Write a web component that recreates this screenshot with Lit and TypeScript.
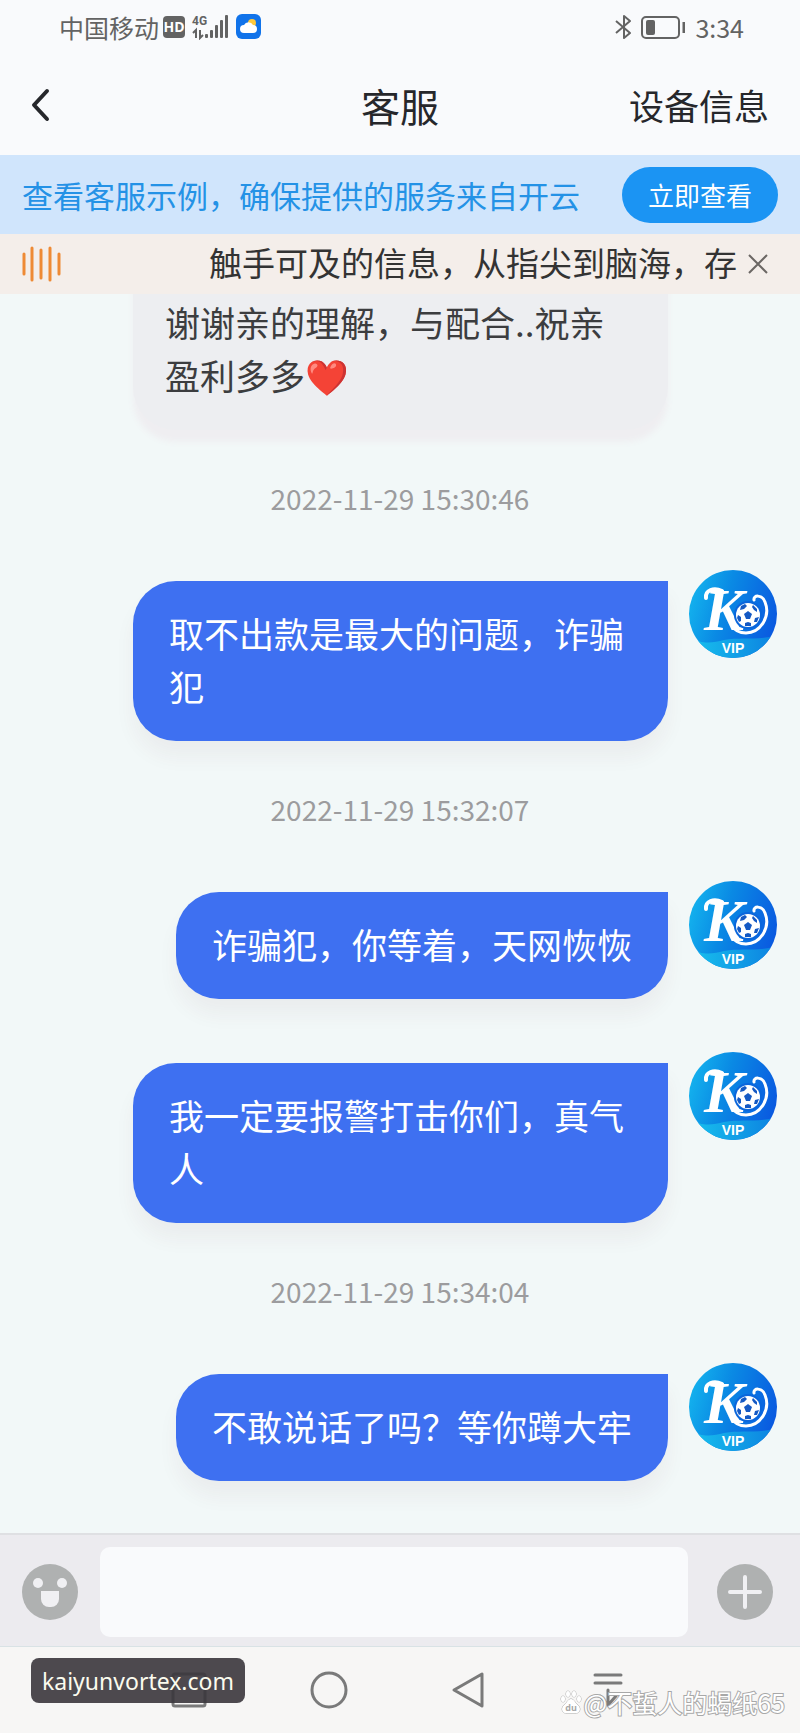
import { LitElement, html, css, svg } from 'lit';
import { customElement, property } from 'lit/decorators.js';

interface Entry {
  kind: 'time' | 'sent' | 'received';
  text: string;
}

const entries: Entry[] = [
  { kind: 'received', text: '谢谢亲的理解，与配合..祝亲盈利多多❤️' },
  { kind: 'time', text: '2022-11-29 15:30:46' },
  { kind: 'sent', text: '取不出款是最大的问题，诈骗犯' },
  { kind: 'time', text: '2022-11-29 15:32:07' },
  { kind: 'sent', text: '诈骗犯，你等着，天网恢恢' },
  { kind: 'sent', text: '我一定要报警打击你们，真气人' },
  { kind: 'time', text: '2022-11-29 15:34:04' },
  { kind: 'sent', text: '不敢说话了吗？等你蹲大牢' },
];

@customElement('vip-avatar')
export class VipAvatar extends LitElement {
  static styles = css`
    :host {
      display: block;
      flex: none;
      width: 90px;
      height: 90px;
    }
    svg {
      display: block;
    }
    .letter {
      font: italic 700 60px 'Liberation Serif', serif;
    }
    .vip {
      font: 700 14px 'Liberation Sans', sans-serif;
    }
  `;

  render() {
    return html`
      <svg width="90" height="90" viewBox="0 0 90 90" role="img" aria-label="K VIP">
        <defs>
          <linearGradient id="disc" x1="0" y1="0.3" x2="1" y2="0.6">
            <stop offset="0" stop-color="#14b4ee"/>
            <stop offset="0.4" stop-color="#0a8ae4"/>
            <stop offset="1" stop-color="#0a58e0"/>
          </linearGradient>
          <linearGradient id="wave" x1="0" y1="0" x2="1" y2="0">
            <stop offset="0" stop-color="#18c3ee"/>
            <stop offset="1" stop-color="#0c80e0"/>
          </linearGradient>
          <clipPath id="round"><circle cx="45" cy="45" r="44"/></clipPath>
        </defs>
        <g clip-path="url(#round)">
          <rect width="90" height="90" fill="url(#disc)"/>
          <path d="M0 67 C14 76 24 74 36 71 C54 68 70 72 90 66 V90 H0Z" fill="url(#wave)"/>
        </g>
        <text class="letter" x="16" y="61" fill="#fff">K</text>
        <!-- swashes around the letter and the ball -->
        <g fill="none" stroke="#fff" stroke-linecap="round">
          <path d="M34 22 C26 18 17 21 18 29" stroke-width="4"/>
          <path d="M44 56 C47 62 52 64 58 64 C72 64 83 48 77 33 C74 25 65 26 66 31" stroke-width="3"/>
        </g>
        <circle cx="60" cy="46" r="14" fill="#0a66dc"/>
        <circle cx="60" cy="46" r="12" fill="#fff"/>
        <g fill="#1459c4">
          <path d="M60 42 l4 3 -2 5 h-4 l-2 -5z"/>
          <path d="M53 37 l4 -2 2 2 -3 3 -4 1z M65 36 l4 4 0 3 -3 -2 -2 -3z M71 48 l-2 5 -3 0 1 -4z M63 57 l-6 0 0 -3 3 -1 3 1z M49 49 l1 -3 3 2 0 4 -2 1z"/>
        </g>
        <text class="vip" x="45" y="84" text-anchor="middle" fill="#fff">VIP</text>
      </svg>
    `;
  }
}

@customElement('chat-message')
export class ChatMessage extends LitElement {
  @property() kind = 'sent';
  @property() text = '';

  static styles = css`
    :host {
      display: flex;
      justify-content: flex-end;
      gap: 20px;
      padding-right: 22px;
    }
    p {
      box-sizing: border-box;
      max-width: 535px;
      margin: 12px 0 0;
      padding: 25px 36px 29px;
      border-radius: 43px 0 43px 43px;
      font-size: 35px;
      line-height: 53px;
      color: #fff;
      background: #3e70f1;
      box-shadow: 0 16px 20px rgba(100, 40, 60, 0.05);
    }
    p.received {
      width: 535px;
      margin: 0 110px 0 0;
      padding: 25px 32px 29px;
      border-radius: 0 0 43px 43px;
      color: #3c3d3f;
      background: #edeef1;
      box-shadow: 0 12px 6px #efeef1;
    }
  `;

  render() {
    return html`
      <p class=${this.kind}>${this.text}</p>
      ${this.kind === 'sent' ? html`<vip-avatar></vip-avatar>` : ''}
    `;
  }
}

@customElement('status-bar')
export class StatusBar extends LitElement {
  static styles = css`
    :host {
      display: flex;
      justify-content: space-between;
      align-items: center;
      height: 54px;
      padding: 0 56px 0 59px;
      font-size: 25px;
      color: #636363;
    }
    div {
      display: flex;
      align-items: center;
    }
    .left {
      gap: 4px;
    }
    .right {
      gap: 10px;
    }
    svg {
      display: block;
    }
    .hd {
      font: 700 14px 'Open Sans', sans-serif;
    }
    .net {
      font: 700 12px Roboto, sans-serif;
    }
  `;

  render() {
    const bars = [4, 8, 13, 18, 23];
    return html`
      <div class="left">
        <span>中国移动</span>
        <svg width="98" height="26" viewBox="0 0 98 26">
          <rect y="2" width="22" height="22" rx="4" fill="#636363"/>
          <text class="hd" x="11" y="18" text-anchor="middle" fill="#fff">HD</text>
          <text class="net" x="29" y="11" fill="#636363">4G</text>
          <path d="M30 19 l3 -3 V24 M37 16 V24 l3 -3" stroke="#636363" stroke-width="2" fill="none"/>
          ${bars.map((h, i) => svg`<rect x=${42 + i * 5} y=${24 - h} width="3" height=${h} rx="1" fill="#636363"/>`)}
          <rect x="73" width="25" height="25" rx="6" fill="#1173ea"/>
          <circle cx="89" cy="9" r="4" fill="#ffc93c"/>
          <path d="M81 19 a4 4 0 0 1 0 -8 a5 5 0 0 1 9 0 a4 4 0 0 1 0 8z" fill="#fff"/>
        </svg>
      </div>
      <div class="right">
        <svg width="70" height="26" viewBox="0 0 70 26" fill="none" stroke="#636363" stroke-width="2">
          <path d="M1 7 L15 19 L9 24 V2 L15 7 L1 19" stroke-linejoin="round"/>
          <rect x="27" y="3" width="37" height="21" rx="4"/>
          <rect x="31" y="6" width="9" height="15" rx="2" fill="#636363" stroke="none"/>
          <path d="M69 8 v11" stroke-width="3"/>
        </svg>
        <span>3:34</span>
      </div>
    `;
  }
}

@customElement('app-root')
export class AppRoot extends LitElement {
  static styles = css`
    :host {
      display: flex;
      flex-direction: column;
      position: relative;
      height: 100vh;
      overflow: hidden;
      font-family: 'Noto Sans CJK SC', sans-serif;
      background: #f9fafc;
    }
    button {
      display: flex;
      align-items: center;
      justify-content: center;
      border: 0;
      padding: 0;
      font-family: inherit;
      background: none;
    }
    svg {
      display: block;
    }
    header {
      display: grid;
      grid-template-columns: 1fr auto 1fr;
      align-items: center;
      height: 101px;
      padding: 0 31px;
      color: #26272b;
    }
    header button {
      justify-self: start;
    }
    h1 {
      margin: 0;
      font-size: 39px;
      font-weight: 400;
    }
    .device {
      justify-self: end;
      font-size: 35px;
      color: inherit;
      text-decoration: none;
    }
    .notice {
      display: flex;
      align-items: center;
      justify-content: space-between;
      height: 79px;
      padding: 0 22px;
      font-size: 31px;
      color: #2492e6;
      background: #d0e5fc;
    }
    .notice button {
      width: 156px;
      height: 56px;
      border-radius: 28px;
      font-size: 26px;
      color: #fff;
      background: #1b94f3;
    }
    .ticker {
      display: flex;
      align-items: center;
      height: 60px;
      padding: 0 32px 0 22px;
      color: #333;
      background: #f4eeea;
    }
    .ticker p {
      flex: 1;
      min-width: 0;
      margin: 0 10px 0 147px;
      padding-bottom: 4px;
      overflow: hidden;
      white-space: nowrap;
      font-size: 33px;
    }
    main {
      display: flex;
      flex: 1;
      flex-direction: column;
      justify-content: flex-end;
      gap: 52px;
      min-height: 0;
      padding-bottom: 52px;
      overflow: hidden;
      background: #f2f8f8;
    }
    time {
      padding-bottom: 3px;
      font-size: 28px;
      line-height: 32px;
      text-align: center;
      color: #9c9c9e;
    }
    form {
      display: flex;
      align-items: center;
      gap: 22px;
      padding: 12px 27px 9px 22px;
      border-top: 2px solid #dfe0e3;
      background: #ecebef;
    }
    input {
      flex: 1;
      min-width: 0;
      height: 90px;
      box-sizing: border-box;
      margin-right: 7px;
      padding: 0 20px;
      border: 0;
      border-radius: 10px;
      font: inherit;
      font-size: 33px;
      background: #f9fafc;
    }
    nav {
      display: grid;
      grid-template-columns: repeat(4, 1fr);
      height: 86px;
      padding: 0 122px 0 119px;
      border-top: 1px solid #d9e2e5;
      background: #f7f6f5;
    }
    .site {
      position: absolute;
      left: 31px;
      bottom: 30px;
      padding: 2px 11px 0;
      border-radius: 8px;
      font-family: 'Noto Sans', sans-serif;
      font-size: 23px;
      line-height: 43px;
      color: #fbfbee;
      background: rgba(58, 54, 60, 0.9);
    }
    .mark {
      position: absolute;
      right: 15px;
      bottom: 13px;
      display: flex;
      align-items: center;
      gap: 2px;
      font-size: 25px;
      line-height: 36px;
      color: #fff;
      -webkit-text-stroke: 2px #a8a8a8;
      paint-order: stroke fill;
    }
    .du {
      font: 700 9px 'Open Sans', sans-serif;
      -webkit-text-stroke: 0;
    }
  `;

  render() {
    return html`
      <status-bar></status-bar>
      <header>
        <button aria-label="返回">
          <svg width="20" height="34" viewBox="0 0 20 34" fill="none" stroke="#26272b" stroke-width="4" stroke-linecap="round" stroke-linejoin="round"><path d="M16 3 L3 17 L16 31"/></svg>
        </button>
        <h1>客服</h1>
        <a class="device" href="#device">设备信息</a>
      </header>
      <div class="notice">
        <span>查看客服示例，确保提供的服务来自开云</span>
        <button>立即查看</button>
      </div>
      <div class="ticker">
        <svg width="40" height="36" viewBox="0 0 40 36" stroke="#ee8a35" stroke-width="3" stroke-linecap="round"><path d="M2 8v20M10 2v32M19 4v28M28 2v32M37 8v20"/></svg>
        <p>触手可及的信息，从指尖到脑海，存</p>
        <button aria-label="关闭">
          <svg width="20" height="20" viewBox="0 0 20 20" stroke="#6b6764" stroke-width="2"><path d="M1 1 L19 19 M19 1 L1 19"/></svg>
        </button>
      </div>
      <main>
        ${entries.map((entry) => entry.kind === 'time'
          ? html`<time>${entry.text}</time>`
          : html`<chat-message .kind=${entry.kind} .text=${entry.text}></chat-message>`)}
      </main>
      <form>
        <button type="button" aria-label="表情">
          <svg width="56" height="56" viewBox="0 0 56 56">
            <circle cx="28" cy="28" r="28" fill="#afb1b1"/>
            <circle cx="16" cy="19" r="5" fill="#f0f0f3"/>
            <circle cx="40" cy="19" r="5" fill="#f0f0f3"/>
            <path d="M19 27 H37 V35 a8 8 0 0 1 -8 8 h-2 a8 8 0 0 1 -8 -8z" fill="#f0f0f3"/>
          </svg>
        </button>
        <input type="text" aria-label="消息">
        <button type="button" aria-label="更多">
          <svg width="56" height="56" viewBox="0 0 56 56">
            <circle cx="28" cy="28" r="28" fill="#afb1b1"/>
            <path d="M28 13v30M13 28h30" stroke="#f0f0f3" stroke-width="4" stroke-linecap="round"/>
          </svg>
        </button>
      </form>
      <nav>
        <button aria-label="最近任务">
          <svg width="36" height="36" viewBox="0 0 36 36" fill="none" stroke="#7a7a7a" stroke-width="3"><rect x="2" y="2" width="32" height="32" rx="2"/></svg>
        </button>
        <button aria-label="主页">
          <svg width="38" height="38" viewBox="0 0 38 38" fill="none" stroke="#7a7a7a" stroke-width="3"><circle cx="19" cy="19" r="17"/></svg>
        </button>
        <button aria-label="后退">
          <svg width="34" height="38" viewBox="0 0 34 38" fill="none" stroke="#7a7a7a" stroke-width="3" stroke-linejoin="round"><path d="M31 3 V35 L3 19z"/></svg>
        </button>
        <button aria-label="下拉">
          <svg width="30" height="36" viewBox="0 0 30 36" fill="none" stroke="#7a7a7a" stroke-width="3" stroke-linecap="round"><path d="M2 3h26M2 11h26M15 18v14M7 24l8 9 8-9"/></svg>
        </button>
      </nav>
      <div class="site">kaiyunvortex.com</div>
      <div class="mark">
        <svg width="22" height="26" viewBox="0 0 22 26" fill="#fff" stroke="#a8a8a8" stroke-width="1">
          <ellipse cx="3" cy="10" rx="2" ry="3"/>
          <ellipse cx="8" cy="5" rx="2" ry="3"/>
          <ellipse cx="14" cy="5" rx="2" ry="3"/>
          <ellipse cx="19" cy="10" rx="2" ry="3"/>
          <path d="M11 10 C14 10 15 14 18 16 C22 20 19 25 15 24 H7 C3 25 0 20 4 16 C7 14 8 10 11 10z"/>
          <text class="du" x="11" y="22" text-anchor="middle" fill="#a8a8a8" stroke="none">du</text>
        </svg>
        <span>@不蜇人的蝎纸65</span>
      </div>
    `;
  }
}
